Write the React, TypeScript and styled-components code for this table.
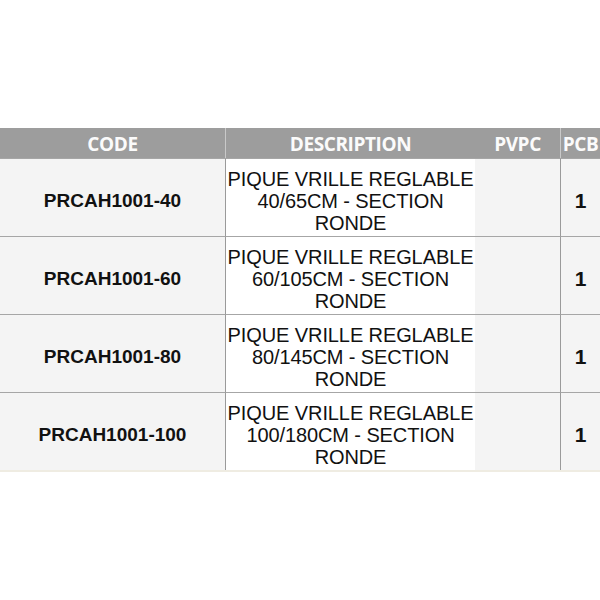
import React from "react";
import styled, { createGlobalStyle } from "styled-components";

const GlobalStyle = createGlobalStyle`
  body {
    margin: 0;
    background: #ffffff;
  }
`;

interface Item {
  code: string;
  lines: string[];
  pvpc: string;
  pcb: string;
}

const items: Item[] = [
  { code: "PRCAH1001-40", lines: ["PIQUE VRILLE REGLABLE", "40/65CM - SECTION", "RONDE"], pvpc: "", pcb: "1" },
  { code: "PRCAH1001-60", lines: ["PIQUE VRILLE REGLABLE", "60/105CM - SECTION", "RONDE"], pvpc: "", pcb: "1" },
  { code: "PRCAH1001-80", lines: ["PIQUE VRILLE REGLABLE", "80/145CM - SECTION", "RONDE"], pvpc: "", pcb: "1" },
  { code: "PRCAH1001-100", lines: ["PIQUE VRILLE REGLABLE", "100/180CM - SECTION", "RONDE"], pvpc: "", pcb: "1" },
];

const Page = styled.div`
  width: 600px;
  height: 600px;
  padding-top: 128px;
  box-sizing: border-box;
  overflow: hidden;
`;

const Table = styled.div`
  display: grid;
  grid-template-columns: 225px 250px 85px 40px;
  width: 600px;
  border-bottom: 2px solid #efece2;
`;

const HeadCell = styled.div<{ $divider?: boolean }>`
  height: 30px;
  background: #9d9d9d;
  color: #fbfbfb;
  font-family: "Open Sans", "Liberation Sans", sans-serif;
  font-weight: 700;
  font-size: 19px;
  letter-spacing: -0.4px;
  display: flex;
  align-items: center;
  justify-content: center;
  box-sizing: border-box;
  padding-top: 1px;
  border-left: ${({ $divider }) => ($divider ? "1px solid #c9c9c9" : "none")};
`;

const Cell = styled.div<{ $shade?: boolean; $divider?: boolean }>`
  height: 78px;
  box-sizing: border-box;
  padding-top: 6px;
  background: ${({ $shade }) => ($shade ? "#f4f4f4" : "#ffffff")};
  border-top: 1px solid #a6a6a6;
  border-left: ${({ $divider }) => ($divider ? "1px solid #9a9a9a" : "none")};
  display: flex;
  flex-direction: column;
  align-items: center;
  justify-content: center;
  color: #111111;
  font-family: "Liberation Sans", Arial, sans-serif;
`;

const Code = styled.span`
  font-weight: 700;
  font-size: 19px;
`;

const Desc = styled.span`
  font-size: 20px;
  line-height: 22px;
  letter-spacing: -0.1px;
  text-align: center;
`;

const Qty = styled.span`
  font-weight: 700;
  font-size: 21px;
`;

export default function App() {
  return (
    <Page>
      <GlobalStyle />
      <Table>
        <HeadCell>CODE</HeadCell>
        <HeadCell $divider>DESCRIPTION</HeadCell>
        <HeadCell>PVPC</HeadCell>
        <HeadCell $divider>PCB</HeadCell>
        {items.map((item) => (
          <React.Fragment key={item.code}>
            <Cell $shade>
              <Code>{item.code}</Code>
            </Cell>
            <Cell $divider>
              {item.lines.map((line) => (
                <Desc key={line}>{line}</Desc>
              ))}
            </Cell>
            <Cell $shade>{item.pvpc}</Cell>
            <Cell $shade $divider>
              <Qty>{item.pcb}</Qty>
            </Cell>
          </React.Fragment>
        ))}
      </Table>
    </Page>
  );
}
